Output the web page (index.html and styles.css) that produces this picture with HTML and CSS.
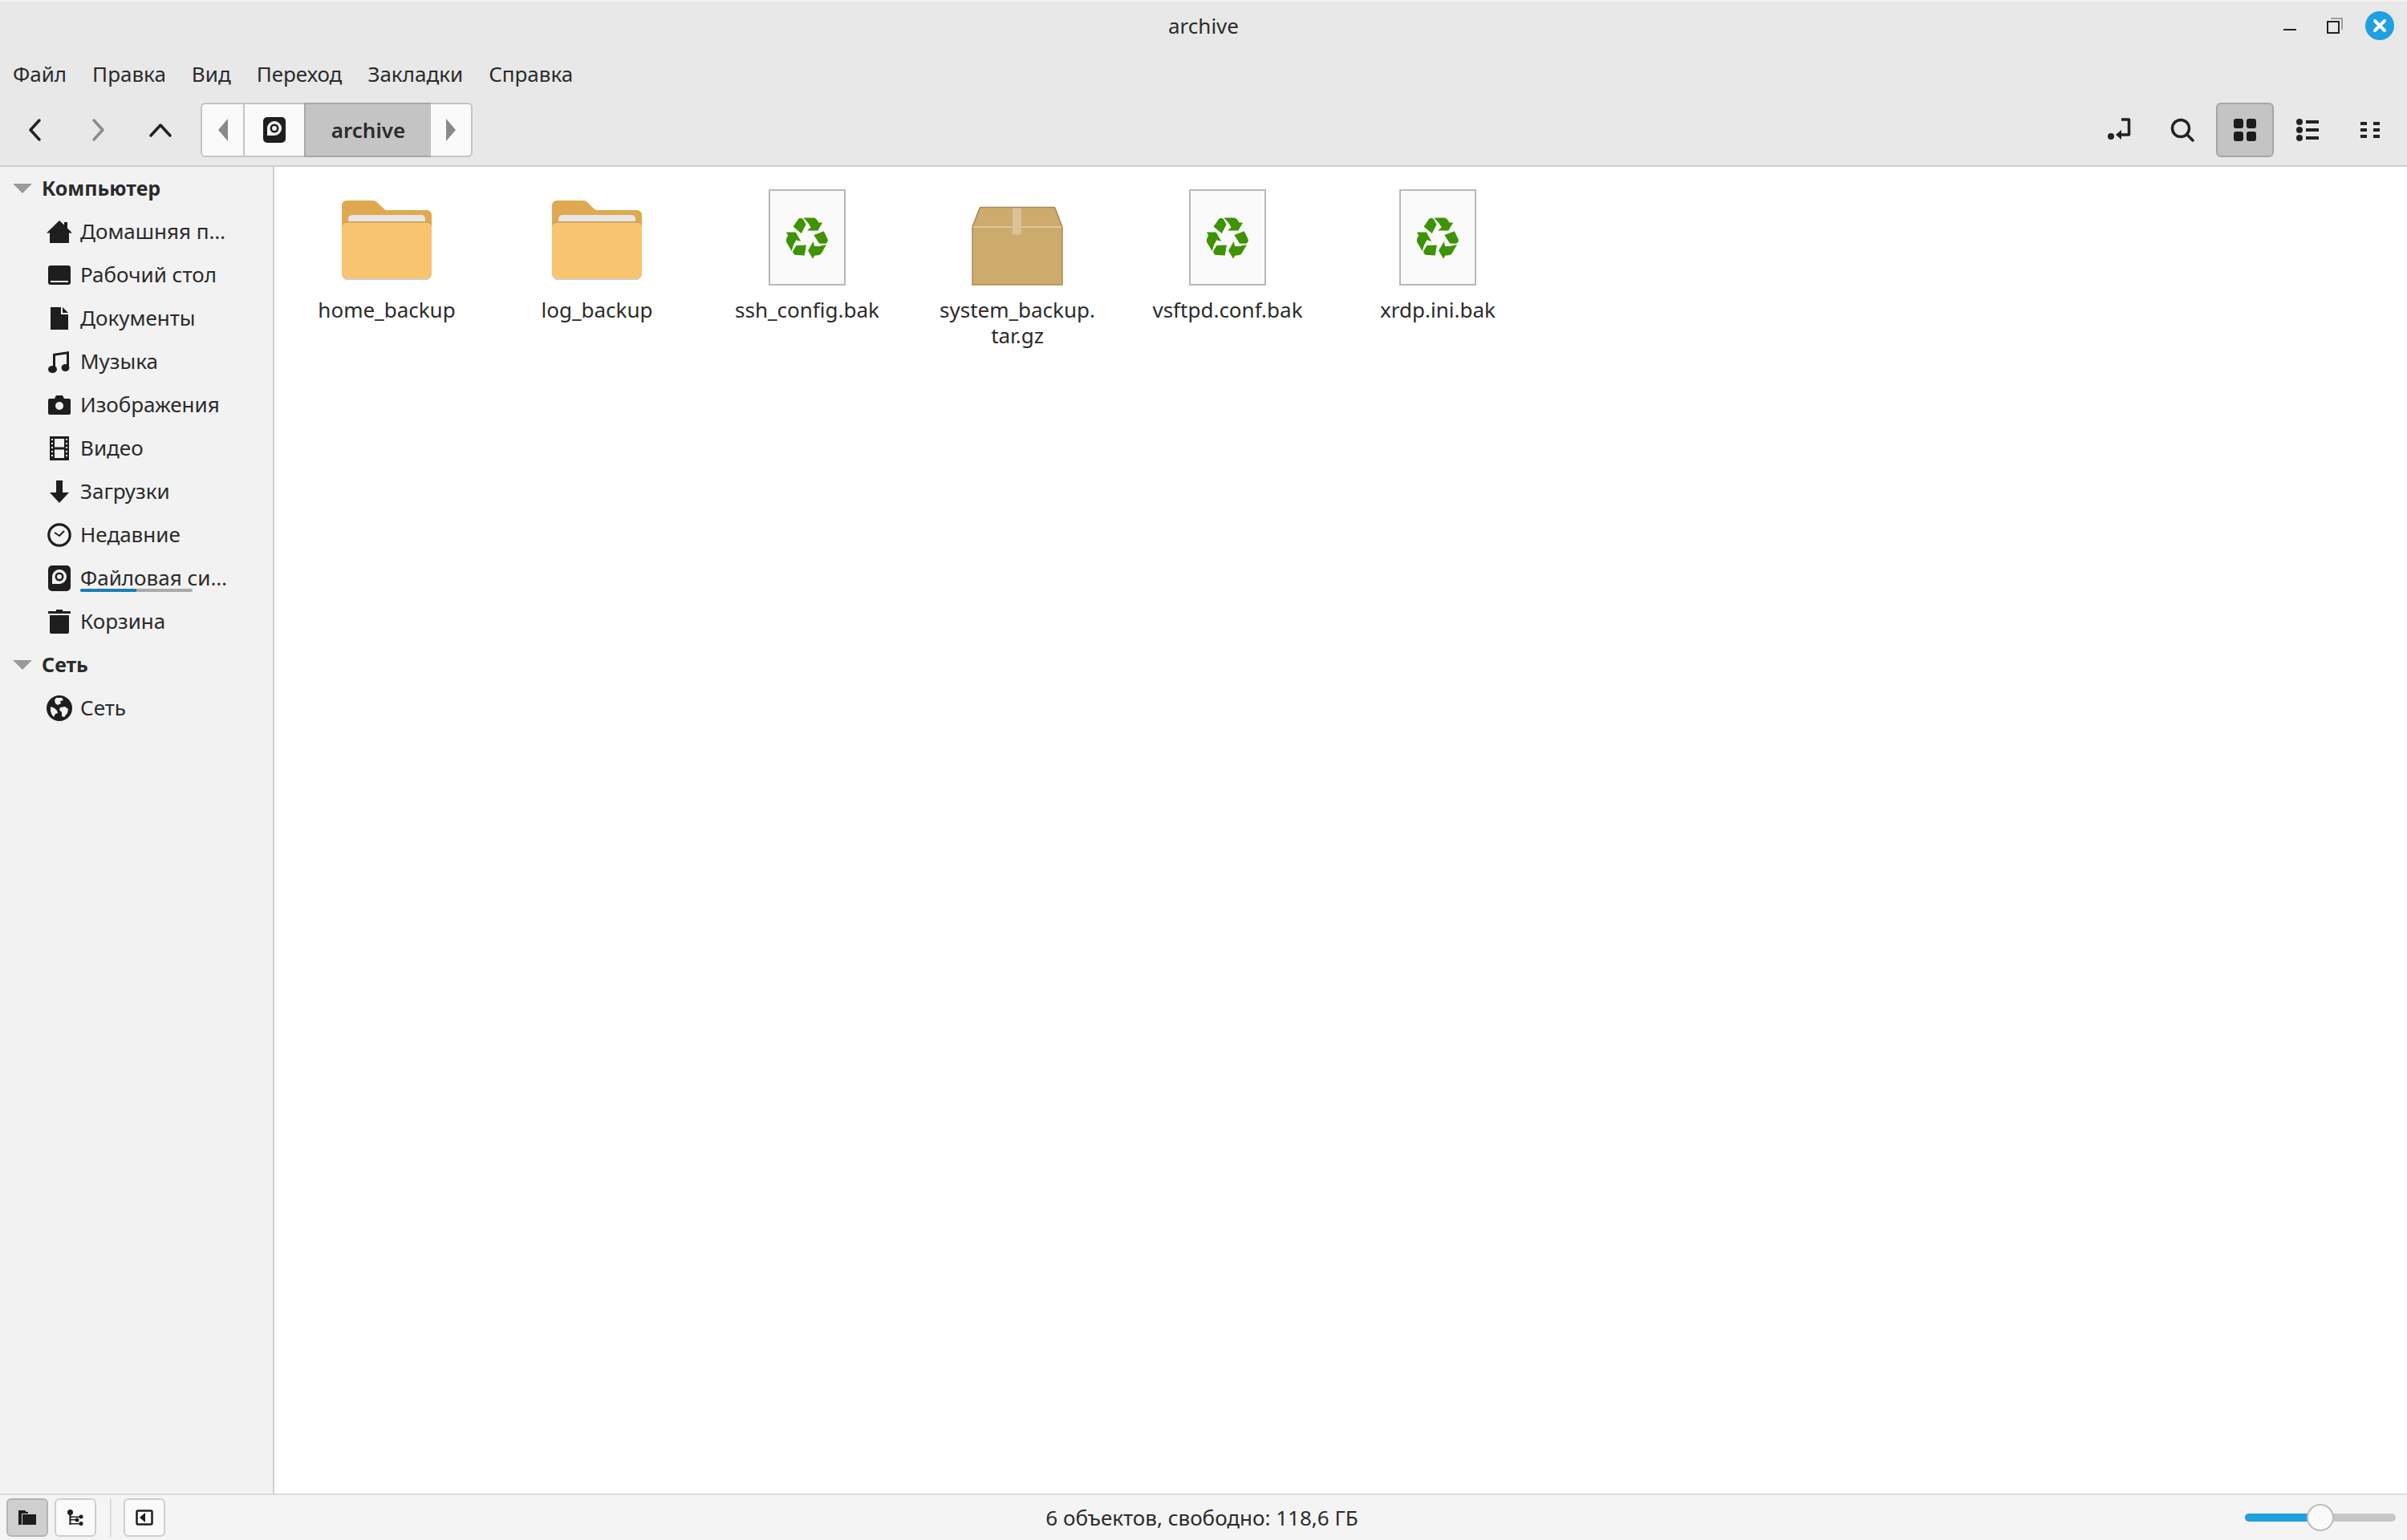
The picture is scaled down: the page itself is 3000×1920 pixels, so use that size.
FILE: index.html
```html
<!DOCTYPE html>
<html lang="ru">
<head>
    <meta charset="UTF-8">
    <title>archive</title>
    <link rel="stylesheet" href="styles.css">
</head>
<body>
    <svg class="defs" width="0" height="0">
        <symbol id="disk" viewBox="0 0 28 32">
            <rect width="28" height="32" rx="5" fill="#1e1e1e"/>
            <path d="M14 5a9 9 0 0 1 0 18H5v-9a9 9 0 0 1 9-9z" fill="#f2f2f2"/>
            <circle cx="14" cy="14" r="5.500" fill="#1e1e1e"/>
            <circle cx="14" cy="14" r="3" fill="#f2f2f2"/>
        </symbol>
        <symbol id="folder" viewBox="0 0 128 128">
            <g transform="translate(0 4)">
                <path d="M8 20a6 6 0 0 1 6-6h32c4 0 6 2 8 4l5 5c2 2 3 3 6 3h49a6 6 0 0 1 6 6v40H8z" fill="#e0a950"/>
                <rect x="16" y="32" width="96" height="24" rx="5" fill="#e6e6e6"/>
                <path d="M8 46a6 6 0 0 1 6-6h100a6 6 0 0 1 6 6v59a8 8 0 0 1-8 8H16a8 8 0 0 1-8-8z" fill="#c99b50"/>
                <path d="M8 47.500a6 6 0 0 1 6-6h100a6 6 0 0 1 6 6v57.500a8 8 0 0 1-8 8H16a8 8 0 0 1-8-8z" fill="#f8c46f"/>
                <path d="M8 103a8 8 0 0 0 8 8h96a8 8 0 0 0 8-8v2a8 8 0 0 1-8 8H16a8 8 0 0 1-8-8z" fill="#d3ccc0"/>
            </g>
        </symbol>
        <symbol id="backup" viewBox="0 0 128 128">
            <rect x="17" y="5" width="94" height="118" fill="#fafafa" stroke="#b8b8b8" stroke-width="2"/>
            <g fill="#3d9300" stroke="#3d9300" stroke-width="3" transform="translate(64 64.500) scale(.35)">
                <g id="arrow-pair">
                    <path d="M-48-40L-30-66Q-24-71-16-66L-6-47L-21-18z"/>
                    <path d="M-10-70H24Q33-68 40-53H52L37-27H4L15-37L4-55z"/>
                </g>
                <use href="#arrow-pair" transform="rotate(120)"/>
                <use href="#arrow-pair" transform="rotate(240)"/>
            </g>
        </symbol>
        <symbol id="package" viewBox="0 0 128 128">
            <path d="M18 26.500h92l1 1 9 23.500v72H8V51l9-23.500z" fill="#cdab6c" stroke="#a88a5a" stroke-width="1.500"/>
            <rect x="9" y="50" width="110" height="2" fill="#e0c797"/>
            <path d="M58 27.500h11v34l-3-2-2 2-3-2-3 2z" fill="#dcc295"/>
        </symbol>
    </svg>

    <div class="window">
        <header class="titlebar">
            <span></span>
            <span class="title">archive</span>
            <div class="wm-buttons">
                <svg class="wm-min" width="16" height="2"><rect width="16" height="2" fill="#222"/></svg>
                <svg class="wm-max" width="20" height="20">
                    <path d="M5 1h14v14" fill="none" stroke="#888" stroke-width="1.500"/>
                    <rect x="1" y="5" width="14" height="14" fill="none" stroke="#222" stroke-width="2"/>
                </svg>
                <svg width="36" height="36">
                    <circle cx="18" cy="18" r="18" fill="#1fa0e0"/>
                    <path d="M12 12l12 12M24 12l-12 12" stroke="#fff" stroke-width="4" stroke-linecap="round"/>
                </svg>
            </div>
        </header>

        <nav class="menubar">
            <span>Файл</span>
            <span>Правка</span>
            <span>Вид</span>
            <span>Переход</span>
            <span>Закладки</span>
            <span>Справка</span>
        </nav>

        <div class="toolbar">
            <div class="tool-group">
                <button class="tool"><svg width="24" height="32"><path d="M17 4L6 16l11 12" fill="none" stroke="#222" stroke-width="3.500" stroke-linecap="round" stroke-linejoin="round"/></svg></button>
                <button class="tool"><svg width="24" height="32"><path d="M7 4l11 12L7 28" fill="none" stroke="#8c8c8c" stroke-width="3.500" stroke-linecap="round" stroke-linejoin="round"/></svg></button>
                <button class="tool"><svg width="30" height="24"><path d="M3 19L15 6l12 13" fill="none" stroke="#222" stroke-width="3.500" stroke-linecap="round" stroke-linejoin="round"/></svg></button>
            </div>
            <div class="pathbar">
                <button class="path-arrow"><svg width="12" height="28"><path d="M12 0v28L0 14z" fill="#8a8a8a"/></svg></button>
                <button class="path-home"><svg width="28" height="32"><use href="#disk"/></svg></button>
                <button class="path-current">archive</button>
                <button class="path-arrow path-next"><svg width="12" height="28"><path d="M0 0v28l12-14z" fill="#8a8a8a"/></svg></button>
            </div>
            <div class="tool-group tool-right">
                <button class="tool">
                    <svg width="30" height="30">
                        <circle cx="4" cy="23" r="4" fill="#222"/>
                        <path d="M17 2h9.500v19H14" fill="none" stroke="#222" stroke-width="3.500" stroke-linejoin="round"/>
                        <path d="M17 15v12l-7-6z" fill="#222"/>
                    </svg>
                </button>
                <button class="tool">
                    <svg width="30" height="30">
                        <circle cx="13" cy="13" r="10.500" fill="none" stroke="#222" stroke-width="3.500"/>
                        <path d="M21 21l7 7" stroke="#222" stroke-width="3.500" stroke-linecap="round"/>
                    </svg>
                </button>
                <button class="tool tool-active">
                    <svg width="28" height="28" fill="#1c1c1c">
                        <rect width="12" height="12" rx="3"/><rect x="16" width="12" height="12" rx="3"/>
                        <rect y="16" width="12" height="12" rx="3"/><rect x="16" y="16" width="12" height="12" rx="3"/>
                    </svg>
                </button>
                <button class="tool">
                    <svg width="28" height="28" fill="#222">
                        <circle cx="4" cy="4" r="4"/><circle cx="4" cy="14" r="4"/><circle cx="4" cy="24" r="4"/>
                        <rect x="12" y="2" width="16" height="4"/><rect x="12" y="12" width="16" height="4"/><rect x="12" y="22" width="16" height="4"/>
                    </svg>
                </button>
                <button class="tool">
                    <svg width="24" height="20" fill="#222">
                        <rect width="8" height="4"/><rect y="8" width="8" height="4"/><rect y="16" width="8" height="4"/>
                        <rect x="16" width="8" height="4"/><rect x="16" y="8" width="8" height="4"/><rect x="16" y="16" width="8" height="4"/>
                    </svg>
                </button>
            </div>
        </div>

        <div class="content">
            <aside class="sidebar">
                <div class="side-head"><i class="caret"></i><span>Компьютер</span></div>
                <div class="side-row">
                    <svg class="side-icon" width="32" height="28" viewBox="0 0 32 28"><path d="M16 0l6 5.500V2h4v7.500l6 6h-4V28H4V15.500H0z" fill="#1e1e1e"/></svg>
                    <span>Домашняя п…</span>
                </div>
                <div class="side-row">
                    <svg class="side-icon" width="28" height="24" viewBox="0 0 28 24"><rect width="28" height="24" rx="3" fill="#1e1e1e"/><rect x="3" y="19" width="22" height="2" fill="#f2f2f2"/></svg>
                    <span>Рабочий стол</span>
                </div>
                <div class="side-row">
                    <svg class="side-icon" width="22" height="28" viewBox="0 0 22 28"><path d="M0 0h13v9h9v19H0zM15 0l7 7h-7z" fill="#1e1e1e"/></svg>
                    <span>Документы</span>
                </div>
                <div class="side-row">
                    <svg class="side-icon" width="28" height="28" viewBox="0 0 28 28"><path d="M6 4l20-3v3L9 6.500V23H6zM23 3h3v20h-3z" fill="#1e1e1e"/><ellipse cx="5.500" cy="23.500" rx="5.500" ry="4.500" fill="#1e1e1e"/><ellipse cx="21.500" cy="21.500" rx="5" ry="4.500" fill="#1e1e1e"/></svg>
                    <span>Музыка</span>
                </div>
                <div class="side-row">
                    <svg class="side-icon" width="28" height="24" viewBox="0 0 28 24"><path d="M2 4h6l2-4h8l2 4h6a2 2 0 0 1 2 2v16a2 2 0 0 1-2 2H2a2 2 0 0 1-2-2V6a2 2 0 0 1 2-2z" fill="#1e1e1e"/><circle cx="14" cy="13" r="5" fill="#f2f2f2"/></svg>
                    <span>Изображения</span>
                </div>
                <div class="side-row">
                    <svg class="side-icon" width="24" height="30" viewBox="0 0 24 30"><path d="M0 0h24v30H0z" fill="#1e1e1e"/><path d="M6 3h12v10.500H6zM6 16.500h12V27H6z" fill="#f2f2f2"/><path d="M2 3h2v2H2zM2 8h2v2H2zM2 13h2v2H2zM2 18h2v2H2zM2 23h2v2H2zM20 3h2v2h-2zM20 8h2v2h-2zM20 13h2v2h-2zM20 18h2v2h-2zM20 23h2v2h-2z" fill="#f2f2f2"/></svg>
                    <span>Видео</span>
                </div>
                <div class="side-row">
                    <svg class="side-icon" width="24" height="28" viewBox="0 0 24 28"><path d="M8 0h8v15h8L12 28 0 15h8z" fill="#1e1e1e"/></svg>
                    <span>Загрузки</span>
                </div>
                <div class="side-row">
                    <svg class="side-icon" width="30" height="30" viewBox="0 0 30 30"><circle cx="15" cy="15" r="13.200" fill="none" stroke="#1e1e1e" stroke-width="3.200"/><path d="M9 12l6 4 6-6" fill="none" stroke="#1e1e1e" stroke-width="2"/></svg>
                    <span>Недавние</span>
                </div>
                <div class="side-row">
                    <svg class="side-icon" width="28" height="32"><use href="#disk"/></svg>
                    <span>Файловая си…</span>
                    <div class="usage"><div class="usage-fill"></div></div>
                </div>
                <div class="side-row">
                    <svg class="side-icon" width="28" height="30" viewBox="0 0 28 30"><path d="M10 0h8v2h10v3H0V2h10z" fill="#1e1e1e"/><path d="M2 7h24v21a2 2 0 0 1-2 2H4a2 2 0 0 1-2-2z" fill="#1e1e1e"/></svg>
                    <span>Корзина</span>
                </div>
                <div class="side-head"><i class="caret"></i><span>Сеть</span></div>
                <div class="side-row">
                    <svg class="side-icon" width="32" height="32" viewBox="0 0 32 32"><circle cx="16" cy="16" r="16" fill="#1e1e1e"/><path d="M12 3l7 0 2 3-4 1 1 3-4 2-3-2-1-4zM17 15l6-1 4 3-1 5-4 5-3-1 0-5-3-3zM5 14l5 2 3 3 1 3-3 1-2 4-3-4-1-4z" fill="#f2f2f2"/></svg>
                    <span>Сеть</span>
                </div>
            </aside>
            <main class="files">
                <div class="file">
                    <svg class="file-icon"><use href="#folder"/></svg>
                    <span>home_backup</span>
                </div>
                <div class="file">
                    <svg class="file-icon"><use href="#folder"/></svg>
                    <span>log_backup</span>
                </div>
                <div class="file">
                    <svg class="file-icon"><use href="#backup"/></svg>
                    <span>ssh_config.bak</span>
                </div>
                <div class="file">
                    <svg class="file-icon"><use href="#package"/></svg>
                    <span>system_backup.<br>tar.gz</span>
                </div>
                <div class="file">
                    <svg class="file-icon"><use href="#backup"/></svg>
                    <span>vsftpd.conf.bak</span>
                </div>
                <div class="file">
                    <svg class="file-icon"><use href="#backup"/></svg>
                    <span>xrdp.ini.bak</span>
                </div>
            </main>
        </div>

        <footer class="statusbar">
            <div class="status-left">
                <button class="status-btn status-active">
                    <svg width="22" height="18" fill="#1e1e1e"><path d="M0 0h8l2 2h2v2H4v14H0z"/><path d="M5 5h17v13H5z"/></svg>
                </button>
                <button class="status-btn">
                    <svg width="20" height="20" fill="#1e1e1e">
                        <circle cx="3.500" cy="3.500" r="3.500"/><rect x="2.500" y="4" width="2" height="15"/>
                        <rect x="2.500" y="8.500" width="14" height="1.500"/><rect x="2.500" y="12" width="10" height="1.500"/><rect x="2.500" y="17" width="14" height="1.500"/>
                        <circle cx="17" cy="9" r="2.500"/><circle cx="12" cy="13" r="2.500"/><circle cx="17" cy="17.500" r="2.500"/>
                    </svg>
                </button>
                <div class="status-sep"></div>
                <button class="status-btn">
                    <svg width="22" height="20"><rect x="1.500" y="1.500" width="19" height="17" rx="1.500" fill="none" stroke="#1e1e1e" stroke-width="2.500"/><path d="M12 4v12l-7-6z" fill="#1e1e1e"/></svg>
                </button>
            </div>
            <div class="status-text">6 объектов, свободно: 118,6 ГБ</div>
            <div class="zoom-slider">
                <div class="zoom-track"><div class="zoom-fill"></div></div>
                <div class="zoom-knob"></div>
            </div>
        </footer>
    </div>
</body>
</html>
```

FILE: styles.css
```css
body {
    margin: 0;
    font-family: "Noto Sans", sans-serif;
    font-size: 26px;
    color: #2b2b2b;
    overflow: hidden;
}
button {
    font: inherit;
    color: inherit;
    background: none;
    border: none;
    padding: 0;
}
.defs {
    position: absolute;
}
.window {
    display: flex;
    flex-direction: column;
    height: 100vh;
}
.titlebar {
    display: grid;
    grid-template-columns: 1fr auto 1fr;
    align-items: center;
    height: 60px;
    border-top: 2px solid #f2f2f2;
    background: #e8e8e8;
}
.wm-buttons {
    display: flex;
    align-items: center;
    justify-content: flex-end;
    padding-right: 16px;
}
.wm-min {
    margin: 10px 38px 0 0;
}
.wm-max {
    margin-right: 28px;
}
.menubar {
    display: flex;
    gap: 32px;
    align-items: center;
    height: 60px;
    padding-left: 16px;
    background: #e8e8e8;
}
.toolbar {
    display: flex;
    align-items: center;
    height: 86px;
    padding: 0 10px 4px 8px;
    box-sizing: border-box;
    background: #e8e8e8;
    border-bottom: 2px solid #cecece;
}
.tool-group {
    display: flex;
    gap: 6px;
}
.tool-right {
    margin-left: auto;
}
.tool {
    display: flex;
    align-items: center;
    justify-content: center;
    width: 72px;
    height: 68px;
    border: 2px solid transparent;
    border-radius: 6px;
}
.tool-active {
    background: #c4c4c4;
    border-color: #a6a6a6;
}
.pathbar {
    display: flex;
    height: 68px;
    margin-left: 14px;
    border: 2px solid #c4c4c4;
    border-radius: 6px;
    background: #fafafa;
    box-sizing: border-box;
}
.pathbar button {
    display: flex;
    align-items: center;
    justify-content: center;
}
.path-arrow {
    width: 53px;
    border-right: 2px solid #c4c4c4 !important;
}
.path-next {
    width: 50px;
    border-right: none !important;
}
.path-home {
    width: 74px;
}
.path-current {
    width: 158px;
    margin: -2px 0;
    font-weight: 600;
    background: #c4c4c4;
    border-top: 2px solid #a6a6a6;
    border-bottom: 2px solid #a6a6a6;
    border-left: 2px solid #a6a6a6;
}
.content {
    display: flex;
    flex: 1;
    min-height: 0;
}
.sidebar {
    width: 342px;
    box-sizing: border-box;
    background: #f2f2f2;
    border-right: 2px solid #cecece;
}
.side-head {
    display: flex;
    align-items: center;
    height: 54px;
    font-size: 25px;
    font-weight: 700;
}
.caret {
    width: 0;
    height: 0;
    margin: 0 12px 0 16px;
    border-left: 12px solid transparent;
    border-right: 12px solid transparent;
    border-top: 12px solid #999;
}
.side-row {
    position: relative;
    display: flex;
    align-items: center;
    height: 54px;
    padding-left: 58px;
}
.side-icon {
    flex: none;
    width: 32px;
    margin-right: 10px;
}
.side-row span,
.side-head span {
    padding-bottom: 2px;
    white-space: nowrap;
}
.usage {
    position: absolute;
    left: 100px;
    bottom: 10px;
    width: 140px;
    height: 4px;
    border-radius: 2px;
    background: #aaa;
}
.usage-fill {
    width: 50%;
    height: 100%;
    border-radius: 2px 0 0 2px;
    background: #1a80b6;
}
.files {
    display: flex;
    align-items: flex-start;
    flex: 1;
    padding: 24px 0 0 9px;
    background: #fff;
}
.file {
    display: flex;
    flex-direction: column;
    align-items: center;
    width: 262px;
    line-height: 32px;
    text-align: center;
}
.file-icon {
    width: 128px;
    height: 128px;
    margin-bottom: 10px;
}
.statusbar {
    display: grid;
    grid-template-columns: 1fr auto 1fr;
    align-items: center;
    height: 58px;
    box-sizing: border-box;
    background: #f4f4f4;
    border-top: 2px solid #dcdcdc;
}
.status-left {
    display: flex;
    align-items: center;
    padding-left: 8px;
}
.status-btn {
    display: flex;
    align-items: center;
    justify-content: center;
    width: 52px;
    height: 48px;
    margin-right: 8px;
    border: 2px solid #cfcfcf;
    border-radius: 6px;
    background: #fafafa;
    box-sizing: border-box;
}
.status-active {
    background: #cfcfcf;
    border-color: #b4b4b4;
}
.status-sep {
    width: 2px;
    height: 48px;
    margin: 0 15px 0 9px;
    background: #dcdcdc;
}
.status-text {
    margin-left: -4px;
}
.zoom-slider {
    position: relative;
    justify-self: end;
    width: 188px;
    height: 10px;
    margin-right: 14px;
}
.zoom-track {
    height: 10px;
    border-radius: 5px;
    background: #c6c6c6;
}
.zoom-fill {
    width: 50%;
    height: 100%;
    border-radius: 5px 0 0 5px;
    background: #1fa0e0;
}
.zoom-knob {
    position: absolute;
    left: 77px;
    top: -12px;
    width: 34px;
    height: 34px;
    box-sizing: border-box;
    border: 2px solid #bdbdbd;
    border-radius: 50%;
    background: #fafafa;
}
```
